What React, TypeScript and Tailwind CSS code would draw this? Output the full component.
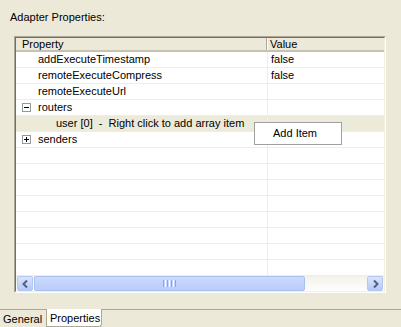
import React from "react";

type Row = {
  name?: string;
  value?: string;
  indent?: number;
  toggle?: "minus" | "plus";
  selected?: boolean;
};

const rows: Row[] = [
  { name: "addExecuteTimestamp", value: "false", indent: 22 },
  { name: "remoteExecuteCompress", value: "false", indent: 22 },
  { name: "remoteExecuteUrl", indent: 22 },
  { name: "routers", indent: 22, toggle: "minus" },
  { name: "user [0]  -  Right click to add array item", indent: 40, selected: true },
  { name: "senders", indent: 22, toggle: "plus" },
  {}, {}, {}, {}, {}, {}, {}, {},
];

function Toggle({ kind }: { kind: "minus" | "plus" }) {
  return (
    <svg width="9" height="9" viewBox="0 0 9 9" className="absolute left-[6px] top-[3px]">
      <rect x="0.5" y="0.5" width="8" height="8" fill="#fff" stroke="#919b9c" />
      <path d="M2 4.5h5" stroke="#000" />
      {kind === "plus" && <path d="M4.5 2v5" stroke="#000" />}
    </svg>
  );
}

function Arrow({ dir }: { dir: "left" | "right" }) {
  return (
    <svg width="7" height="8" viewBox="0 0 7 8">
      <path
        d={dir === "left" ? "M5 0.5L1.5 4L5 7.5" : "M2 0.5L5.5 4L2 7.5"}
        fill="none"
        stroke="#4d6185"
        strokeWidth="2"
      />
    </svg>
  );
}

function ScrollButton({ dir }: { dir: "left" | "right" }) {
  return (
    <div className="flex h-[15px] w-[16px] items-center justify-center rounded-[2px] border border-[#b4c8f4] bg-gradient-to-b from-[#d8e3fd] to-[#b6c9f7]">
      <Arrow dir={dir} />
    </div>
  );
}

export default function App() {
  return (
    <div
      className="relative flex h-[327px] w-[401px] flex-col overflow-hidden bg-[#ece9d8] text-[11px] leading-[13px] text-black"
      style={{ fontFamily: '"Liberation Sans", Arial, sans-serif' }}
    >
      <div className="pl-[10px] pt-[11px]">Adapter Properties:</div>

      {/* property table */}
      <div className="ml-[14px] mt-[12px] h-[257px] w-[372px] border border-b-white border-l-[#aca899] border-r-white border-t-[#aca899]">
        <div className="flex h-full flex-col border border-b-[#f1efe2] border-l-[#716f64] border-r-[#f1efe2] border-t-[#716f64] bg-white">
          <div className="flex h-[14px] border-b-2 border-b-[#c5c2b2] bg-[#ece9d8]">
            <div className="w-[251px] border-r border-r-[#aca899] pl-[6px] leading-[12px]">Property</div>
            <div className="flex-1 border-l border-l-white pl-[2px] leading-[12px]">Value</div>
          </div>

          <div className="flex flex-1 flex-col">
            {rows.map((r, i) => (
              <div
                key={i}
                className={`flex h-[16px] border-b border-b-[#efede4] ${r.selected ? "bg-[#ecead9]" : ""}`}
              >
                <div
                  className="relative w-[252px] whitespace-pre border-r border-r-[#efede4] leading-[15px]"
                  style={{ paddingLeft: r.indent ?? 0 }}
                >
                  {r.toggle && <Toggle kind={r.toggle} />}
                  {r.name}
                </div>
                <div className="flex-1 pl-[3px] leading-[15px]">{r.value}</div>
              </div>
            ))}
          </div>

          {/* horizontal scrollbar */}
          <div className="flex h-[15px] items-center bg-gradient-to-b from-[#f3f1ea] to-[#fefefd] px-[1px]">
            <ScrollButton dir="left" />
            <div className="ml-[1px] flex h-[15px] w-[271px] items-center justify-center rounded-[2px] border border-[#a9c0f1] bg-gradient-to-b from-[#cbdafd] to-[#b9cdfa]">
              <div className="flex h-[7px] gap-[1px]">
                <div className="w-[1px] bg-[#8ba8ea]" />
                <div className="w-[1px] bg-white" />
                <div className="w-[1px] bg-[#8ba8ea]" />
                <div className="w-[1px] bg-white" />
                <div className="w-[1px] bg-[#8ba8ea]" />
                <div className="w-[1px] bg-white" />
                <div className="w-[1px] bg-[#8ba8ea]" />
              </div>
            </div>
            <div className="flex-1" />
            <ScrollButton dir="right" />
          </div>
        </div>
      </div>

      {/* tabs */}
      <div className="mt-[16px] flex h-[18px]">
        <div className="w-[46px] border-t border-t-[#aca899] pl-[3px] pt-[3px]">General</div>
        <div className="w-[56px] rounded-br-[3px] border-x border-b border-x-[#aca899] border-b-[#aca899] bg-white pl-[3px] pt-[3px]">
          Properties
        </div>
        <div className="flex-1 border-t border-t-[#aca899]" />
      </div>

      {/* context menu */}
      <div className="absolute left-[254px] top-[122px] flex h-[23px] w-[88px] items-center border border-[#a0a0a0] bg-white pl-[18px]">
        Add Item
      </div>
    </div>
  );
}
